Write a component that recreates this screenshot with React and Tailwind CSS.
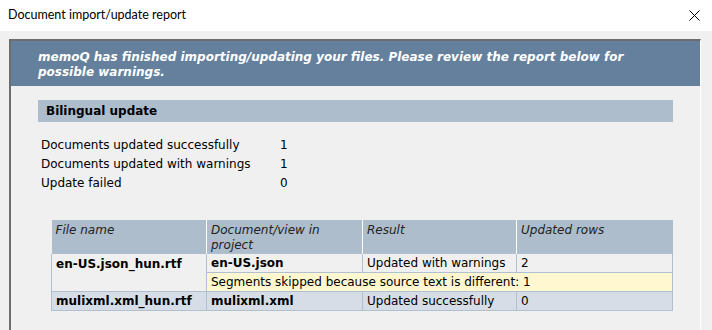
import React from "react";

const stats = [
  ["Documents updated successfully", "1"],
  ["Documents updated with warnings", "1"],
  ["Update failed", "0"],
];

const App = () => {
  return (
    <div className="w-[712px] h-[330px] overflow-hidden bg-[#f0f0f0] font-['DejaVu_Sans',sans-serif] text-[12px] text-black">
      {/* Title bar */}
      <div className="h-[31px] bg-white flex items-center justify-between pl-[8px] pr-[12px]">
        <span className="font-['Lato',sans-serif] text-[12.5px] text-black">
          Document import/update report
        </span>
        <svg width="11" height="11" viewBox="0 0 11 11" className="text-black">
          <path d="M0.5 0.5L10.5 10.5M10.5 0.5L0.5 10.5" stroke="currentColor" strokeWidth="1" />
        </svg>
      </div>

      <div className="pt-[8px] pl-[9px] pr-[11px]">
        <div className="h-[300px] border-t-2 border-l-2 border-[#6d6d6d] border-r border-r-white">
          {/* Banner */}
          <div className="h-[45px] bg-[#64809d] px-[27px] pt-[9px] text-white font-bold italic text-[12px] leading-[15px]">
            memoQ has finished importing/updating your files. Please review the report below for possible warnings.
          </div>

          <div className="pl-[27px] pr-[27px] pt-[14px]">
            <div className="h-[22px] bg-[#adbdcc] flex items-center pl-[8px] font-bold text-[12px]">
              Bilingual update
            </div>

            <div className="pt-[13px] pl-[3px]">
              {stats.map(([label, value]) => (
                <div key={label} className="flex h-[19px] items-center">
                  <span className="w-[239px]">{label}</span>
                  <span>{value}</span>
                </div>
              ))}
            </div>

            <table className="mt-[28px] ml-[13px] w-[621px] border-collapse table-fixed">
              <colgroup>
                <col className="w-[155px]" />
                <col className="w-[156px]" />
                <col className="w-[154px]" />
                <col className="w-[156px]" />
              </colgroup>
              <thead>
                <tr className="bg-[#adbdcc] italic text-[#222]">
                  <th className="h-[33px] align-top text-left font-normal px-[4px] pt-[3px] leading-[15px] border-r border-white">
                    File name
                  </th>
                  <th className="align-top text-left font-normal px-[4px] pt-[3px] leading-[15px] border-r border-white">
                    Document/view in project
                  </th>
                  <th className="align-top text-left font-normal px-[4px] pt-[3px] leading-[15px] border-r border-white">
                    Result
                  </th>
                  <th className="align-top text-left font-normal px-[4px] pt-[3px] leading-[15px]">
                    Updated rows
                  </th>
                </tr>
              </thead>
              <tbody>
                <tr className="h-[19px]">
                  <td rowSpan={2} className="align-top px-[4px] pt-[1px] font-bold border-l border-[#b0c0d0]">
                    en-US.json_hun.rtf
                  </td>
                  <td className="px-[4px] font-bold border border-[#b0c0d0]">en-US.json</td>
                  <td className="px-[4px] border border-[#b0c0d0]">Updated with warnings</td>
                  <td className="px-[4px] border border-[#b0c0d0]">2</td>
                </tr>
                <tr className="h-[19px]">
                  <td colSpan={3} className="px-[4px] bg-[#fff7cf] border border-[#b0c0d0] whitespace-nowrap">
                    Segments skipped because source text is different: 1
                  </td>
                </tr>
                <tr className="h-[19px] bg-[#d6dde6]">
                  <td className="px-[4px] font-bold border border-[#b0c0d0]">mulixml.xml_hun.rtf</td>
                  <td className="px-[4px] font-bold border border-[#b0c0d0]">mulixml.xml</td>
                  <td className="px-[4px] border border-[#b0c0d0]">Updated successfully</td>
                  <td className="px-[4px] border border-[#b0c0d0]">0</td>
                </tr>
              </tbody>
            </table>
          </div>
        </div>
      </div>
    </div>
  );
};

export default App;
